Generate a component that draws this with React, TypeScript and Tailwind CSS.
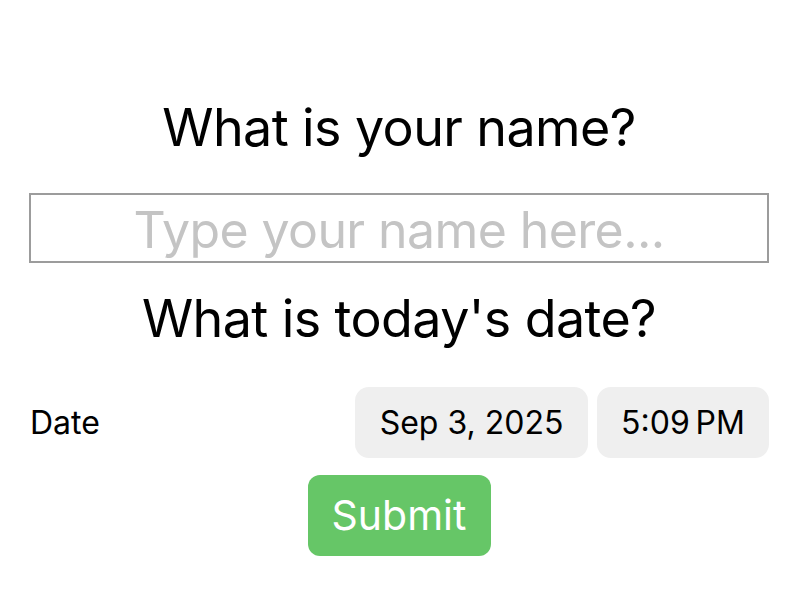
export default function App() {
  return (
    <div
      className="flex min-h-screen w-full flex-col items-center bg-white pt-[92px] text-black"
      style={{ fontFamily: "Inter, 'Noto Sans', sans-serif" }}
    >
      <h1 className="h-[72px] text-[52px] leading-[72px] font-normal tracking-[-0.6px]">
        What is your name?
      </h1>
      <input
        className="mt-[29px] h-[70px] w-[740px] border-2 border-[#9c9c9c] pt-[4px] text-center text-[50px] tracking-[-0.6px] outline-none placeholder:text-[#c4c4c4]"
        placeholder="Type your name here..."
      />
      <h2 className="mt-[20px] h-[72px] text-[52px] leading-[72px] font-normal tracking-[-0.6px]">
        What is today's date?
      </h2>
      <div className="mt-[32px] flex w-[740px] items-center">
        <span className="flex-1 pl-[1px] text-[32px]">Date</span>
        <div className="flex gap-[9px]">
          <div className="flex h-[71px] w-[233px] items-center justify-center rounded-[14px] bg-[#efefef] text-[32px]">
            Sep 3, 2025
          </div>
          <div className="flex h-[71px] w-[172px] items-center justify-center rounded-[14px] bg-[#efefef] text-[32px]">
            5:09{"\u2009"}PM
          </div>
        </div>
      </div>
      <button className="mt-[17px] h-[81px] w-[183px] rounded-[12px] bg-[#66c667] text-[41px] text-white">
        Submit
      </button>
    </div>
  );
}
